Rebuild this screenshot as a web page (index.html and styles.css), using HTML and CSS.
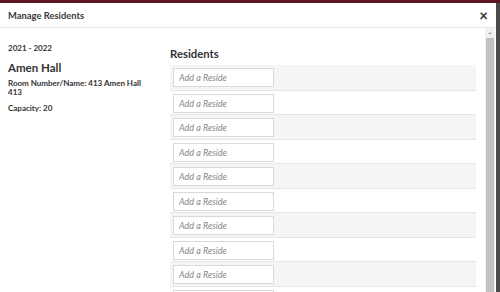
FILE: index.html
```html
<!DOCTYPE html>
<html lang="en">
<head>
  <meta charset="UTF-8" />
  <title>Manage Residents</title>
  <link rel="stylesheet" href="styles.css">
</head>
<body>
  <div class="topbar"></div>
  <div class="stage">
    <div class="modal">
      <header class="modal-header">
        <h1>Manage Residents</h1>
        <span class="close">&times;</span>
      </header>
      <div class="modal-body">
        <div class="content">
          <aside class="room-info">
            <p class="year">2021 - 2022</p>
            <h2>Amen Hall</h2>
            <p>Room Number/Name: 413 Amen Hall 413</p>
            <p>Capacity: 20</p>
          </aside>
          <section class="residents">
            <h3>Residents</h3>
            <ul class="resident-list">
              <li><input type="text" placeholder="Add a Reside" /></li>
              <li><input type="text" placeholder="Add a Reside" /></li>
              <li><input type="text" placeholder="Add a Reside" /></li>
              <li><input type="text" placeholder="Add a Reside" /></li>
              <li><input type="text" placeholder="Add a Reside" /></li>
              <li><input type="text" placeholder="Add a Reside" /></li>
              <li><input type="text" placeholder="Add a Reside" /></li>
              <li><input type="text" placeholder="Add a Reside" /></li>
              <li><input type="text" placeholder="Add a Reside" /></li>
              <li><input type="text" placeholder="Add a Reside" /></li>
            </ul>
          </section>
        </div>
        <div class="scrollbar">
          <span class="arrow"></span>
          <span class="thumb"></span>
        </div>
      </div>
    </div>
    <div class="backdrop-edge"></div>
  </div>
</body>
</html>
```

FILE: styles.css
```css
* {
  box-sizing: border-box;
  margin: 0;
  padding: 0;
}
html, body {
  height: 100%;
  overflow: hidden;
}
body {
  font-family: 'Lato', 'Open Sans', sans-serif;
  color: #333;
  background: #fff;
  display: flex;
  flex-direction: column;
}
.topbar {
  height: 3px;
  background: #5b1621;
  flex-shrink: 0;
}
.stage {
  flex: 1;
  display: flex;
  min-height: 0;
}
.modal {
  width: 496px;
  background: #fff;
  display: flex;
  flex-direction: column;
}
.backdrop-edge {
  flex: 1;
  background: #4a4a4a;
}
.modal-header {
  height: 25px;
  display: flex;
  align-items: center;
  justify-content: space-between;
  padding: 1px 8px 0 8px;
  border-bottom: 1px solid #e8e8e8;
  flex-shrink: 0;
}
.modal-header h1 {
  font-size: 9.4px;
  font-weight: 700;
  color: #3a3a3a;
}
.close {
  font-size: 15px;
  font-weight: 700;
  line-height: 1;
  color: #333;
}
.modal-body {
  flex: 1;
  display: flex;
  min-height: 0;
}
.content {
  flex: 1;
  display: flex;
  padding: 16px 9px 0 8px;
}
.room-info {
  width: 162px;
  font-size: 8px;
  font-weight: 700;
  line-height: 9px;
}
.room-info .year {
  margin-bottom: 8px;
}
.room-info h2 {
  font-size: 11.5px;
  font-weight: 700;
  line-height: 14px;
  margin-bottom: 4px;
}
.room-info p {
  margin-bottom: 7px;
  padding-right: 14px;
}
.residents {
  flex: 1;
  padding-top: 2px;
}
.residents h3 {
  font-size: 11.3px;
  font-weight: 700;
  line-height: 16px;
  margin-bottom: 3px;
  color: #333;
}
.resident-list {
  list-style: none;
}
.resident-list li {
  height: 24.5px;
  padding: 3px;
  border-top: 1px solid #e6e6e6;
}
.resident-list li:first-child {
  border-top: none;
}
.resident-list li:nth-child(odd) {
  background: #f5f5f5;
}
.resident-list input {
  display: block;
  width: 101px;
  height: 19px;
  border: 1px solid #d9d9d9;
  background: #fff;
  padding: 0 5px;
  font-family: inherit;
  font-size: 9px;
  outline: none;
}
.resident-list input::placeholder {
  color: #888;
  font-style: italic;
}
.scrollbar {
  width: 10px;
  margin-right: 1px;
  display: flex;
  flex-direction: column;
  background: #f1f1f1;
}
.arrow {
  height: 10px;
  display: flex;
  align-items: center;
  justify-content: center;
}
.arrow::before {
  content: '';
  border-left: 2px solid transparent;
  border-right: 2px solid transparent;
  border-bottom: 2px solid #a3a3a3;
}
.thumb {
  flex: 1;
  background: #c1c1c1;
  margin: 0 1px;
}
```
